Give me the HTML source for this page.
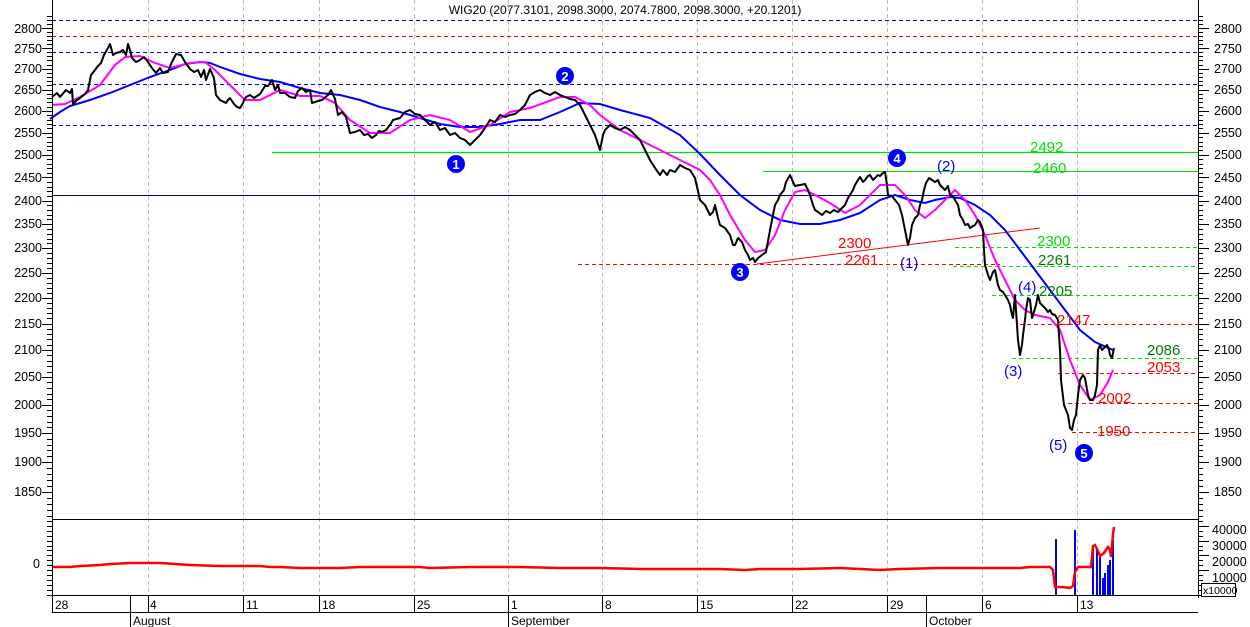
<!DOCTYPE html>
<html><head><meta charset="utf-8"><style>
html,body{margin:0;padding:0;background:#fff;}
svg{display:block;font-family:"Liberation Sans",sans-serif;}
</style></head><body>
<svg id="s" width="1250" height="627" viewBox="0 0 1250 627" xmlns="http://www.w3.org/2000/svg">
<rect width="1250" height="627" fill="#fff"/>
<g stroke="#bbb" stroke-width="1" stroke-dasharray="4,3">
<line x1="148.5" y1="0" x2="148.5" y2="595"/><line x1="243.5" y1="0" x2="243.5" y2="595"/><line x1="319.5" y1="0" x2="319.5" y2="595"/><line x1="414.5" y1="0" x2="414.5" y2="595"/><line x1="508.5" y1="0" x2="508.5" y2="595"/><line x1="602.5" y1="0" x2="602.5" y2="595"/><line x1="697.5" y1="0" x2="697.5" y2="595"/><line x1="792.5" y1="0" x2="792.5" y2="595"/><line x1="887.5" y1="0" x2="887.5" y2="595"/><line x1="982.5" y1="0" x2="982.5" y2="595"/><line x1="1077.5" y1="0" x2="1077.5" y2="595"/>
</g>
<text x="625" y="14" font-size="12" text-anchor="middle" fill="#000">WIG20 (2077.3101, 2098.3000, 2074.7800, 2098.3000, +20.1201)</text>
<g stroke-width="1" stroke-dasharray="4,3" fill="none">
<line x1="52" y1="20.5" x2="1198" y2="20.5" stroke="#0000ff"/>
<line x1="52" y1="36.5" x2="1198" y2="36.5" stroke="#ff0000"/>
<line x1="52" y1="52.5" x2="1198" y2="52.5" stroke="#0000ff"/>
<line x1="52" y1="84.5" x2="1198" y2="84.5" stroke="#0000ff"/>
<line x1="52" y1="125.5" x2="1198" y2="125.5" stroke="#0000ff"/>
<line x1="578" y1="264.5" x2="1000" y2="264.5" stroke="#ff0000"/>
<line x1="955" y1="247.5" x2="1198" y2="247.5" stroke="#00dd00"/>
<line x1="953" y1="266.5" x2="1120" y2="266.5" stroke="#00dd00"/>
<line x1="1128" y1="266.5" x2="1198" y2="266.5" stroke="#00dd00"/>
<line x1="992" y1="295.5" x2="1198" y2="295.5" stroke="#00dd00"/>
<line x1="1020" y1="324.5" x2="1198" y2="324.5" stroke="#ff0000"/>
<line x1="1012" y1="358.5" x2="1198" y2="358.5" stroke="#00dd00"/>
<line x1="1058" y1="373.5" x2="1198" y2="373.5" stroke="#ff0000"/>
<line x1="1068" y1="403.5" x2="1198" y2="403.5" stroke="#ff0000"/>
<line x1="1072" y1="432.5" x2="1198" y2="432.5" stroke="#ff0000"/>
</g>
<line x1="272" y1="152.5" x2="1198" y2="152.5" stroke="#00dd00" stroke-width="1.3"/>
<line x1="763" y1="171.5" x2="1198" y2="171.5" stroke="#00dd00" stroke-width="1"/>
<line x1="52" y1="195.5" x2="1198" y2="195.5" stroke="#000080" stroke-width="1"/>
<line x1="757" y1="264" x2="1040" y2="228" stroke="#ff0000" stroke-width="1"/>
<polyline fill="none" stroke="#0000ff" stroke-width="2" points="50,119 60,112 70,106 90,100 110,93 130,85 150,77 170,70 185,64 200,62 210,63 220,67 240,74 260,79 280,82 300,88 320,93 340,95 360,100 380,107 400,112 420,118 440,124 460,127 480,127 500,124 520,120 540,120 560,112 580,103 600,104 620,110 650,118 680,135 700,154 720,175 740,195 760,210 780,220 800,224 820,224 840,220 860,213 880,200 895,195 910,200 925,203 935,200 950,197 960,198 975,205 990,215 1005,230 1020,250 1035,270 1050,290 1065,310 1080,330 1095,342 1113,350"/>
<polyline fill="none" stroke="#ff00ff" stroke-width="2" points="52,105 65,104 80,97 100,85 115,65 125,57 140,56 155,63 170,68 190,63 205,62 215,70 230,85 245,100 260,100 280,90 300,96 320,96 335,103 350,120 370,133 390,133 410,120 430,115 450,120 470,132 490,125 510,112 530,108 560,97 575,97 590,105 600,115 620,130 640,140 660,150 680,160 700,170 710,180 720,195 730,215 745,240 755,252 765,250 775,235 785,210 795,192 805,190 815,195 830,203 845,213 860,205 880,185 895,185 905,195 915,210 925,218 935,210 945,200 955,190 965,200 975,215 985,235 995,260 1005,280 1015,300 1025,310 1035,315 1050,318 1060,330 1070,360 1080,385 1090,400 1100,395 1108,382 1113,370"/>
<polyline fill="none" stroke="#000" stroke-width="2" stroke-linejoin="round" points="52,97 57,93 60,97 66,90 70,93 72,89 73,104 77,100 80,98 85,94 88,90 91,75 95,70 98,66 101,63 104,55 108,48 110,44 113,55 116,53 120,52 123,50 126,55 128,44 130,50 132,58 136,62 140,60 144,57 148,62 152,68 156,73 160,68 163,73 168,72 171,64 176,54 181,55 185,62 190,69 194,72 198,70 201,77 204,70 206,80 210,69 214,78 216,95 220,100 226,103 228,100 230,98 234,104 237,107 240,108 243,103 244,100 246,97 250,95 254,98 260,94 265,86 268,86 272,80 275,90 278,85 280,93 285,93 290,97 295,98 298,91 302,88 306,92 310,90 312,103 318,101 322,100 328,95 331,90 335,99 338,115 342,112 346,117 350,133 355,132 360,130 364,135 368,134 372,138 376,135 379,131 382,132 386,130 390,125 393,120 400,118 405,112 410,110 415,114 420,115 425,120 430,125 435,122 440,130 445,128 450,135 455,133 460,138 465,140 470,145 475,140 480,135 485,128 490,120 495,122 500,115 505,117 510,115 515,114 520,110 525,105 530,95 535,92 540,90 545,93 550,95 555,92 560,95 565,97 570,99 575,100 580,105 585,115 590,125 595,135 600,150 603,135 605,130 610,125 615,128 620,130 625,127 630,130 635,135 640,140 645,150 650,160 655,168 660,175 663,170 667,175 670,170 675,172 680,165 685,168 690,170 695,178 700,200 705,205 710,215 713,212 715,205 718,218 720,225 725,228 730,235 733,245 735,245 738,238 742,242 745,250 748,255 750,260 753,258 755,262 758,258 762,255 766,252 770,230 773,215 775,205 778,200 780,195 784,190 786,182 790,175 793,182 795,186 800,185 805,184 808,190 810,195 813,205 815,210 818,212 822,215 826,211 830,213 834,210 838,212 842,208 845,205 848,198 850,195 853,190 855,185 858,180 860,177 863,182 865,180 868,176 870,175 873,180 875,178 878,175 880,176 883,173 885,172 887,185 888,195 892,196 895,200 899,205 902,215 904,225 906,235 908,245 910,238 912,225 915,218 918,215 920,205 922,200 924,190 926,183 929,178 932,180 935,182 938,180 940,185 943,188 945,190 948,186 950,195 953,196 955,200 958,205 960,215 963,220 965,225 968,224 970,228 973,226 975,225 978,220 980,222 983,230 984,250 985,265 988,275 990,280 993,272 995,270 998,285 1000,290 1003,292 1005,295 1008,300 1010,305 1012,315 1013,318 1015,295 1016,310 1018,340 1020,355 1022,345 1023,335 1025,320 1026,310 1028,298 1030,300 1032,318 1033,315 1036,305 1038,295 1040,303 1042,305 1045,308 1048,312 1050,310 1052,314 1055,315 1058,320 1060,350 1061,380 1064,405 1066,410 1068,415 1070,428 1072,430 1074,420 1076,415 1078,395 1080,380 1083,375 1085,378 1088,395 1090,400 1093,400 1095,395 1097,385 1098,350 1100,345 1102,350 1105,347 1107,345 1109,350 1110,355 1112,358 1114,348"/>
<g font-size="15" text-anchor="start">
<text x="1030" y="152" fill="#00dd00">2492</text>
<text x="1033" y="173" fill="#00dd00">2460</text>
<text x="838" y="248" fill="#ff0000">2300</text>
<text x="845" y="265" fill="#ff0000">2261</text>
<text x="900" y="268" fill="#0000ff">(1)</text>
<text x="937" y="171" fill="#0000ff">(2)</text>
<text x="1037" y="246" fill="#00dd00">2300</text>
<text x="1038" y="265" fill="#008000">2261</text>
<text x="1018" y="292" fill="#0000ff">(4)</text>
<text x="1039" y="296" fill="#008000">2205</text>
<text x="1057" y="325" fill="#ff0000">2147</text>
<text x="1004" y="376" fill="#0000ff">(3)</text>
<text x="1147" y="355" fill="#008000">2086</text>
<text x="1147" y="372" fill="#ff0000">2053</text>
<text x="1098" y="403" fill="#ff0000">2002</text>
<text x="1097" y="436" fill="#ff0000">1950</text>
<text x="1049" y="450" fill="#0000ff">(5)</text>
</g>
<g font-size="13" font-weight="bold" text-anchor="middle" fill="#fff">
<circle cx="456" cy="164" r="9" fill="#0000ff"/><text x="456" y="169">1</text>
<circle cx="565" cy="76" r="9" fill="#0000ff"/><text x="565" y="81">2</text>
<circle cx="740" cy="272" r="9" fill="#0000ff"/><text x="740" y="277">3</text>
<circle cx="897" cy="158" r="9" fill="#0000ff"/><text x="897" y="163">4</text>
<circle cx="1084" cy="453" r="9" fill="#0000ff"/><text x="1084" y="458">5</text>
</g>
<!-- volume -->
<g stroke="#0000ff" stroke-width="2">
<line x1="1056" y1="595" x2="1056" y2="539"/><line x1="1075" y1="595" x2="1075" y2="530"/>
<line x1="1093" y1="595" x2="1093" y2="545"/><line x1="1097" y1="595" x2="1097" y2="548"/><line x1="1100" y1="595" x2="1100" y2="557"/><line x1="1103" y1="595" x2="1103" y2="578"/><line x1="1105" y1="595" x2="1105" y2="573"/><line x1="1108" y1="595" x2="1108" y2="565"/><line x1="1110" y1="595" x2="1110" y2="560"/><line x1="1113" y1="595" x2="1113" y2="540"/>
</g>
<polyline fill="none" stroke="#ff0000" stroke-width="2.5" points="52,567 70,567 80,566 100,565 110,564 130,563 160,563 175,564 190,565 220,566 260,566 270,567 280,567 300,568 320,568 340,568 360,567 380,567 420,567 430,568 470,567 500,567 520,567 560,568 600,568 640,569 680,569 720,569 745,570 760,569 800,569 840,568 880,570 900,569 940,568 980,568 1020,568 1030,567 1050,567 1053,570 1055,587 1062,587 1070,588 1073,586 1075,572 1078,567 1091,567 1093,546 1095,545 1098,551 1100,556 1104,553 1108,547 1110,550 1111,557 1113,534 1114,527"/>
<line x1="52" y1="519.5" x2="1198" y2="519.5" stroke="#000"/>
<line x1="52" y1="595.5" x2="1198" y2="595.5" stroke="#000"/>
<line x1="52" y1="612.5" x2="1198" y2="612.5" stroke="#000"/>
<line x1="52.5" y1="0" x2="52.5" y2="612" stroke="#000"/>
<line x1="1198.5" y1="0" x2="1198.5" y2="598" stroke="#000"/>
<g stroke="#000">
<line x1="148.5" y1="595" x2="148.5" y2="612"/><line x1="243.5" y1="595" x2="243.5" y2="612"/><line x1="319.5" y1="595" x2="319.5" y2="612"/><line x1="414.5" y1="595" x2="414.5" y2="612"/><line x1="508.5" y1="595" x2="508.5" y2="627"/><line x1="602.5" y1="595" x2="602.5" y2="612"/><line x1="697.5" y1="595" x2="697.5" y2="612"/><line x1="792.5" y1="595" x2="792.5" y2="612"/><line x1="887.5" y1="595" x2="887.5" y2="612"/><line x1="982.5" y1="595" x2="982.5" y2="612"/><line x1="1077.5" y1="595" x2="1077.5" y2="612"/>
<line x1="130.5" y1="595" x2="130.5" y2="627"/><line x1="926.5" y1="595" x2="926.5" y2="627"/>
</g>
<g font-size="12" fill="#000">
<text x="55" y="609">28</text><text x="150" y="609">4</text><text x="246" y="609">11</text><text x="322" y="609">18</text><text x="417" y="609">25</text><text x="511" y="609">1</text><text x="605" y="609">8</text><text x="700" y="609">15</text><text x="795" y="609">22</text><text x="890" y="609">29</text><text x="985" y="609">6</text><text x="1080" y="609">13</text>
<text x="133" y="625">August</text><text x="511" y="625">September</text><text x="929" y="625">October</text>
</g>
<g id="ticks" stroke="#000" stroke-width="1"></g>
<g font-size="12.5" fill="#000">
<g text-anchor="end">
<text x="42" y="33">2800</text><text x="42" y="53">2750</text><text x="42" y="73">2700</text><text x="42" y="94">2650</text><text x="42" y="115">2600</text><text x="42" y="137">2550</text><text x="42" y="159">2500</text><text x="42" y="182">2450</text><text x="42" y="205">2400</text><text x="42" y="228">2350</text><text x="42" y="252">2300</text><text x="42" y="277">2250</text><text x="42" y="302">2200</text><text x="42" y="328">2150</text><text x="42" y="354">2100</text><text x="42" y="381">2050</text><text x="42" y="409">2000</text><text x="42" y="437">1950</text><text x="42" y="466">1900</text><text x="42" y="496">1850</text>
<text x="40" y="568">0</text>
</g>
<g text-anchor="start">
<text x="1214" y="33">2800</text><text x="1214" y="53">2750</text><text x="1214" y="73">2700</text><text x="1214" y="94">2650</text><text x="1214" y="115">2600</text><text x="1214" y="137">2550</text><text x="1214" y="159">2500</text><text x="1214" y="182">2450</text><text x="1214" y="205">2400</text><text x="1214" y="228">2350</text><text x="1214" y="252">2300</text><text x="1214" y="277">2250</text><text x="1214" y="302">2200</text><text x="1214" y="328">2150</text><text x="1214" y="354">2100</text><text x="1214" y="381">2050</text><text x="1214" y="409">2000</text><text x="1214" y="437">1950</text><text x="1214" y="466">1900</text><text x="1214" y="496">1850</text>
<text x="1212" y="534">40000</text><text x="1212" y="550">30000</text><text x="1212" y="566">20000</text><text x="1212" y="582">10000</text>
</g>
</g>
<rect x="1201.5" y="583.5" width="34" height="13" fill="#fff" stroke="#000"/>
<text x="1203" y="594" font-size="10.5">x10000</text>
</svg>
<script>
var g=document.getElementById('ticks'),h='';
function Y(v){return 28+1119.4*(Math.log(2800)-Math.log(v));}
for(var v=1780;v<=2830;v+=10){var y=Math.round(Y(v))+0.5;if(y<0||y>518)continue;var M=v%50==0;
h+='<line x1="1198" y1="'+y+'" x2="'+(M?1209:1203)+'" y2="'+y+'"/>';
h+='<line x1="'+(M?42:47)+'" y1="'+y+'" x2="52" y2="'+y+'"/>';}
for(var i=0;i<16;i++){var y=Math.round(521+i*4.9)+0.5;var M=(i%3==1);
h+='<line x1="1198" y1="'+y+'" x2="'+(M?1209:1203)+'" y2="'+y+'"/><line x1="47" y1="'+y+'" x2="52" y2="'+y+'"/>';}
g.innerHTML=h;
</script>
</body></html>
